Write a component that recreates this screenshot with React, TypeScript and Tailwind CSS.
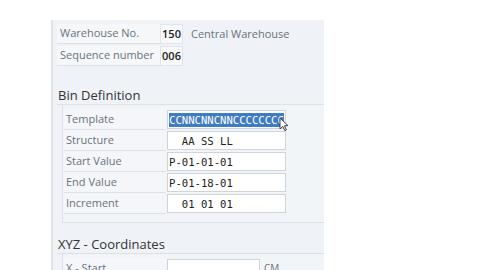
const labelFont = { fontFamily: '"Open Sans", "Noto Sans", sans-serif' };

interface FieldRow {
  label: string;
  value: string;
  selected?: boolean;
}

const binRows: FieldRow[] = [
  { label: "Template", value: "CCNNCNNCNNCCCCCCCC", selected: true },
  { label: "Structure", value: "  AA SS LL" },
  { label: "Start Value", value: "P-01-01-01" },
  { label: "End Value", value: "P-01-18-01" },
  { label: "Increment", value: "  01 01 01" },
];

function Cursor() {
  return (
    <svg className="absolute left-[279px] top-[117px]" width="10" height="15" viewBox="0 0 10 15">
      <path d="M1 1 L1 12 L3.8 9.4 L5.8 13.6 L7.4 12.9 L5.4 8.8 L9 8.6 Z" fill="#fff" stroke="#333" strokeWidth="0.9" strokeLinejoin="round" />
    </svg>
  );
}

function BinRow({ row }: { row: FieldRow }) {
  return (
    <div className="flex h-[21px] items-stretch">
      <div className="w-[102px] pl-[2px] flex items-center text-[11px] text-[#6a737d] bg-[#f4f6f9] border-b border-[#dde1e6]">
        {row.label}
      </div>
      <div className="w-[119px] ml-px my-px bg-white border border-[#cfd4da] flex items-center pl-px overflow-hidden">
        <span
          className={
            "whitespace-pre text-[10.6px] leading-[14px] " +
            (row.selected ? "bg-[#3f7cc2] text-white font-medium" : "text-[#222]")
          }
          style={{ fontFamily: '"DejaVu Sans Mono", "Liberation Mono", monospace' }}
        >
          {row.value}
        </span>
      </div>
    </div>
  );
}

export default function App() {
  return (
    <div className="relative w-[480px] h-[270px] bg-white overflow-hidden pl-[51px] pt-[20px]" style={labelFont}>
      <div className="w-[273px] h-[250px] bg-[#eff2f6] border-l-2 border-[#e0e4e9] pl-[4px] pt-[4px]">
        <div className="flex flex-col gap-[2px]">
          <div className="flex h-[20px] items-stretch">
            <div className="w-[103px] pl-[3px] flex items-center text-[11px] text-[#6a737d] bg-[#f5f7f9] border-b border-[#dde1e6]">
              Warehouse No.
            </div>
            <div className="w-[23px] bg-[#f7f8fa] border border-[#e1e4e8] flex items-center justify-center text-[11px] font-semibold text-[#222]">
              150
            </div>
            <div className="ml-[8px] flex items-center text-[11px] text-[#6a737d]">Central Warehouse</div>
          </div>
          <div className="flex h-[20px] items-stretch">
            <div className="w-[103px] pl-[3px] flex items-center text-[11px] text-[#6a737d] bg-[#f5f7f9] border-b border-[#dde1e6]">
              Sequence number
            </div>
            <div className="w-[23px] bg-[#f7f8fa] border border-[#e1e4e8] flex items-center justify-center text-[11px] font-semibold text-[#222]">
              006
            </div>
          </div>
        </div>

        <div className="mt-[21px] pl-[1px] text-[13px] leading-[17px] text-[#333]">Bin Definition</div>
        <div className="border-t border-[#dde1e6] pl-[5px]">
          <div className="border-l border-b border-[#dde1e6] bg-[#f2f5f8] pl-[1px] pt-[4px] pb-[8px]">
            {binRows.map((row) => (
              <BinRow key={row.label} row={row} />
            ))}
          </div>
        </div>

        <div className="mt-[13px] pl-[1px] text-[13px] leading-[17px] text-[#333]">XYZ - Coordinates</div>
        <div className="border-t border-[#dde1e6] pl-[5px]">
          <div className="border-l border-[#dde1e6] bg-[#f2f5f8] pl-[1px] pt-[4px]">
            <div className="flex h-[21px] items-stretch">
              <div className="w-[102px] pl-[2px] flex items-center text-[11px] text-[#6a737d] bg-[#f4f6f9] border-b border-[#dde1e6]">
                X - Start
              </div>
              <div className="w-[93px] ml-px my-px bg-white border border-[#cfd4da]" />
              <div className="ml-[4px] flex items-center text-[10px] text-[#6a737d]">CM</div>
            </div>
          </div>
        </div>
      </div>
      <Cursor />
    </div>
  );
}
